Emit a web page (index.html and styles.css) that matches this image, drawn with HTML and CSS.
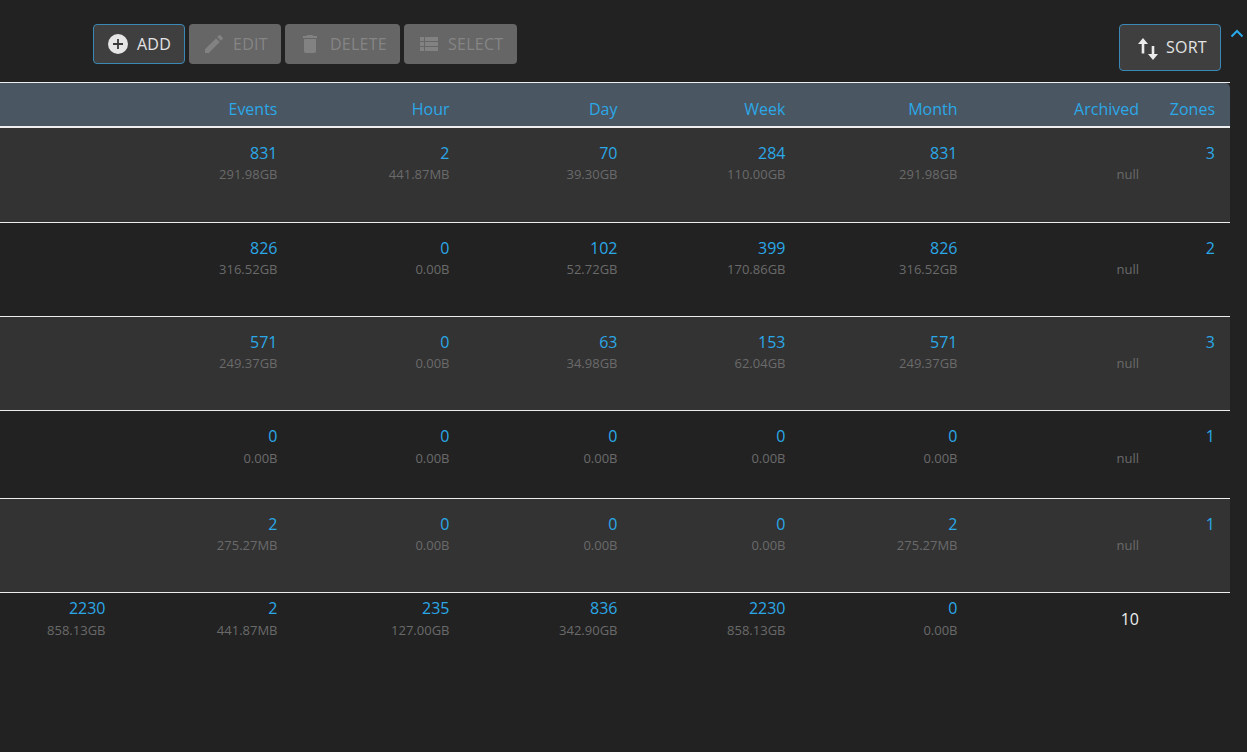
FILE: index.html
```html
<!DOCTYPE html>
<html lang="en">
<head>
<meta charset="utf-8">
<title>Monitors</title>
<link rel="stylesheet" href="styles.css">
</head>
<body>
<div class="toolbar">
  <div class="actions">
    <button class="btn active add"><svg class="ico" viewBox="0 0 24 24"><circle cx="12" cy="12" r="10" fill="#e6e6e6"/><path d="M12 7v10M7 12h10" stroke="#3a3a3a" stroke-width="1.8"/></svg>ADD</button>
    <button class="btn off edit"><svg class="ico" viewBox="0 0 24 24"><path d="M3 17.25V21h3.75L17.81 9.94l-3.75-3.75L3 17.25zM20.71 7.04a1 1 0 0 0 0-1.41l-2.34-2.34a1 1 0 0 0-1.41 0l-1.83 1.83 3.75 3.75 1.83-1.83z" fill="#828282"/></svg>EDIT</button>
    <button class="btn off delete"><svg class="ico" viewBox="0 0 24 24"><path d="M6 19a2 2 0 0 0 2 2h8a2 2 0 0 0 2-2V7H6v12zM19 4h-3.500l-1-1h-5l-1 1H5v2h14V4z" fill="#828282"/></svg>DELETE</button>
    <button class="btn off select"><svg class="ico" viewBox="0 0 24 24"><path d="M3 5h4v4H3zM8 5h13v4H8zM3 10h4v4H3zM8 10h13v4H8zM3 15h4v4H3zM8 15h13v4H8z" fill="#828282"/></svg>SELECT</button>
  </div>
  <div class="side">
    <button class="btn active sort"><svg class="ico" viewBox="0 0 24 24"><path d="M7 2 12 8H8.300v9.500H5.700V8H2zM17 24l5-6h-3.700V10h-2.600v8H12z" fill="#ececec"/></svg>SORT</button>
    <svg class="caret" viewBox="0 0 14 9"><path d="M1.500 7.500 7 2l5.500 5.500" fill="none" stroke="#2aa8e8" stroke-width="2"/></svg>
  </div>
</div>

<div class="table">
  <div class="row head">
    <span></span><span>Events</span><span>Hour</span><span>Day</span><span>Week</span><span>Month</span><span>Archived</span><span>Zones</span>
  </div>

  <div class="row alt first">
    <span></span>
    <div class="cell"><a>831</a><small>291.98GB</small></div>
    <div class="cell"><a>2</a><small>441.87MB</small></div>
    <div class="cell"><a>70</a><small>39.30GB</small></div>
    <div class="cell"><a>284</a><small>110.00GB</small></div>
    <div class="cell"><a>831</a><small>291.98GB</small></div>
    <div class="cell"><a>&nbsp;</a><small>null</small></div>
    <div class="cell"><a>3</a></div>
  </div>

  <div class="row tall">
    <span></span>
    <div class="cell"><a>826</a><small>316.52GB</small></div>
    <div class="cell"><a>0</a><small>0.00B</small></div>
    <div class="cell"><a>102</a><small>52.72GB</small></div>
    <div class="cell"><a>399</a><small>170.86GB</small></div>
    <div class="cell"><a>826</a><small>316.52GB</small></div>
    <div class="cell"><a>&nbsp;</a><small>null</small></div>
    <div class="cell"><a>2</a></div>
  </div>

  <div class="row alt tall">
    <span></span>
    <div class="cell"><a>571</a><small>249.37GB</small></div>
    <div class="cell"><a>0</a><small>0.00B</small></div>
    <div class="cell"><a>63</a><small>34.98GB</small></div>
    <div class="cell"><a>153</a><small>62.04GB</small></div>
    <div class="cell"><a>571</a><small>249.37GB</small></div>
    <div class="cell"><a>&nbsp;</a><small>null</small></div>
    <div class="cell"><a>3</a></div>
  </div>

  <div class="row short">
    <span></span>
    <div class="cell"><a>0</a><small>0.00B</small></div>
    <div class="cell"><a>0</a><small>0.00B</small></div>
    <div class="cell"><a>0</a><small>0.00B</small></div>
    <div class="cell"><a>0</a><small>0.00B</small></div>
    <div class="cell"><a>0</a><small>0.00B</small></div>
    <div class="cell"><a>&nbsp;</a><small>null</small></div>
    <div class="cell"><a>1</a></div>
  </div>

  <div class="row alt tall">
    <span></span>
    <div class="cell"><a>2</a><small>275.27MB</small></div>
    <div class="cell"><a>0</a><small>0.00B</small></div>
    <div class="cell"><a>0</a><small>0.00B</small></div>
    <div class="cell"><a>0</a><small>0.00B</small></div>
    <div class="cell"><a>2</a><small>275.27MB</small></div>
    <div class="cell"><a>&nbsp;</a><small>null</small></div>
    <div class="cell"><a>1</a></div>
  </div>

  <div class="row foot">
    <div class="cell"><a>2230</a><small>858.13GB</small></div>
    <div class="cell"><a>2</a><small>441.87MB</small></div>
    <div class="cell"><a>235</a><small>127.00GB</small></div>
    <div class="cell"><a>836</a><small>342.90GB</small></div>
    <div class="cell"><a>2230</a><small>858.13GB</small></div>
    <div class="cell"><a>0</a><small>0.00B</small></div>
    <div class="cell total">10</div>
    <span></span>
  </div>
</div>
</body>
</html>
```

FILE: styles.css
```css
* { box-sizing: border-box; }
html, body { height: 100%; }
body {
  margin: 0;
  background: #222222;
  color: #eeeeee;
  font-family: "Open Sans", "Noto Sans", sans-serif;
  font-size: 16px;
  overflow: hidden;
}
.toolbar {
  height: 82px;
  padding: 24px 0 0 93px;
  display: flex;
  justify-content: space-between;
  align-items: flex-start;
}
.actions { display: flex; gap: 4px; }
.side { display: flex; align-items: flex-start; gap: 9px; padding-right: 3px; }
.btn {
  height: 40px;
  display: inline-flex;
  align-items: center;
  gap: 7px;
  padding: 0 0 0 12px;
  border-radius: 4px;
  font: 16px "Open Sans", "Noto Sans", sans-serif;
  letter-spacing: 0.25px;
  border: 1px solid transparent;
}
.btn.active {
  background: #3f3f3f;
  border-color: #3a88b5;
  color: #e4e4e4;
}
.btn.off {
  background: #666666;
  color: #858585;
}
.add { width: 92px; }
.edit { width: 92px; }
.delete { width: 115px; gap: 8px; }
.select { width: 113px; }
.sort { width: 102px; height: 47px; padding: 0 0 2px 16px; gap: 6px; }
.ico { width: 24px; height: 24px; flex: none; }
.sort .ico { margin-top: 2px; }
.caret { width: 14px; height: 9px; margin-top: 5px; }
.table { width: 1230px; border-top: 1px solid #eeeeee; }
.row {
  display: grid;
  grid-template-columns: 120.5px 172px 172px 168px 168px 172px 181.5px 76px;
  border-bottom: 1px solid #eeeeee;
  text-align: right;
}
.row > * { padding-right: 15px; }
.head {
  height: 45px;
  background: #4a5661;
  border-bottom-width: 2px;
  color: #2aa8e8;
  align-items: start;
  padding-top: 15px;
  line-height: 22px;
  border-top-right-radius: 5px;
}
.alt { background: #333333; }
.first { height: 95px; }
.tall { height: 94px; }
.short { height: 88px; }
.foot { height: 60px; border-bottom: 0; }
.cell { padding-top: 14px; display: flex; flex-direction: column; align-items: flex-end; }
.foot .cell { padding-top: 4px; }
.cell a { color: #2aa8e8; line-height: 22px; height: 22px; }
.cell small { color: #6a6a6a; font-size: 13px; line-height: 18px; margin-top: 1px; }
.short small, .foot small { margin-top: 2px; }
.foot .total { color: #eeeeee; padding-top: 15px; line-height: 22px; }
```
